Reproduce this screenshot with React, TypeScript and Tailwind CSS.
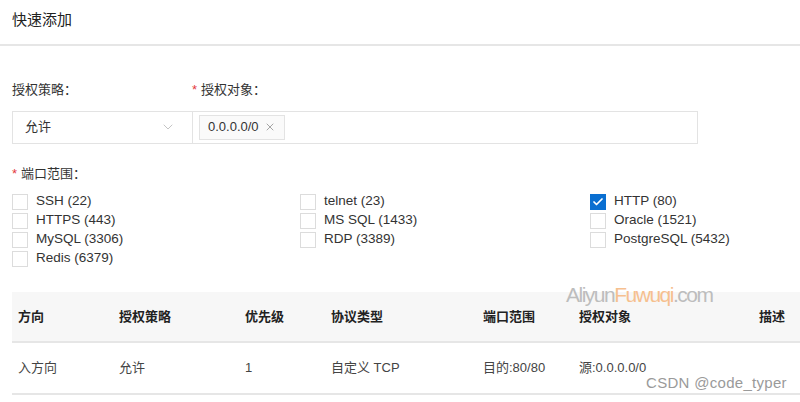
import { Check, ChevronDown, X } from "lucide-react"

const FONT = { fontFamily: '"Liberation Sans", "Noto Sans CJK SC", sans-serif' }

const ports = [
  [
    { label: "SSH (22)" },
    { label: "HTTPS (443)" },
    { label: "MySQL (3306)" },
    { label: "Redis (6379)" },
  ],
  [{ label: "telnet (23)" }, { label: "MS SQL (1433)" }, { label: "RDP (3389)" }],
  [{ label: "HTTP (80)", checked: true }, { label: "Oracle (1521)" }, { label: "PostgreSQL (5432)" }],
]

const cols = [
  { title: "方向", value: "入方向", w: "w-[101px]" },
  { title: "授权策略", value: "允许", w: "w-[126px]" },
  { title: "优先级", value: "1", w: "w-[86px]" },
  { title: "协议类型", value: "自定义 TCP", w: "w-[152px]" },
  { title: "端口范围", value: "目的:80/80", w: "w-[96px]" },
  { title: "授权对象", value: "源:0.0.0.0/0", w: "flex-1" },
]

function Box({ checked }: { checked?: boolean }) {
  if (checked) {
    return (
      <span className="flex h-4 w-4 items-center justify-center bg-[#0a6fd1]">
        <Check className="h-3 w-3 text-white" strokeWidth={3.5} />
      </span>
    )
  }
  return <span className="h-4 w-4 border border-[#dcdcdc] bg-white" />
}

export default function App() {
  return (
    <div className="relative h-[402px] w-[800px] overflow-hidden bg-white text-[#333]" style={FONT}>
      <div className="flex h-[44px] items-center px-3 pb-1 text-[15px] text-[#222]">快速添加</div>
      <div className="h-[2px] bg-[#e6e6e6]" />

      <div className="px-3">
        <div className="mt-[34px] flex text-[13px] text-[#333]">
          <div className="w-[180px]">授权策略：</div>
          <div className="flex items-center gap-1">
            <span className="text-[#e4393c]">*</span>
            <span>授权对象：</span>
          </div>
        </div>

        <div className="mt-[11px] flex h-[33px]">
          <div className="flex w-[181px] items-center justify-between border border-[#e3e3e3] pl-3 pr-4 text-[13px] text-[#333]">
            <span>允许</span>
            <ChevronDown className="h-4 w-4 text-[#b5b5b5]" strokeWidth={1.2} />
          </div>
          <div className="flex w-[505px] items-center border border-l-0 border-[#e3e3e3] pl-[6px]">
            <div className="flex h-[25px] items-center gap-[5px] border border-[#e3e3e3] bg-[#fafafa] px-2 text-[13px] text-[#333]">
              <span>0.0.0.0/0</span>
              <X className="h-3 w-3 text-[#888]" strokeWidth={1.5} />
            </div>
          </div>
        </div>

        <div className="mt-[20px] flex items-center gap-1 text-[13px] text-[#333]">
          <span className="text-[#e4393c]">*</span>
          <span>端口范围：</span>
        </div>

        <div className="mt-[9px] grid grid-cols-[288px_290px_1fr]">
          {ports.map((col, i) => (
            <div key={i} className="flex flex-col">
              {col.map((p) => (
                <div key={p.label} className="flex h-[19px] items-center gap-2 text-[13.5px] text-[#333]">
                  <Box checked={p.checked} />
                  <span>{p.label}</span>
                </div>
              ))}
            </div>
          ))}
        </div>
      </div>

      <div className="ml-3 mt-[24px]">
        <div className="flex h-[51px] items-center border-b-2 border-[#e6e6e6] bg-[#f7f7f7] pl-[6px] pr-[15px] text-[13px] font-bold text-[#222]">
          {cols.map((c) => (
            <div key={c.title} className={c.w}>
              {c.title}
            </div>
          ))}
          <div>描述</div>
        </div>
        <div className="flex h-[52px] items-center border-b-2 border-[#e6e6e6] pl-[6px] pr-[15px] text-[13px] text-[#444]">
          {cols.map((c) => (
            <div key={c.title} className={c.w}>
              {c.value}
            </div>
          ))}
        </div>
      </div>

      <div className="absolute left-[566px] top-[279px] text-[21px] tracking-[-1.5px] text-[#bdbdbd]">
        Aliyun<span className="text-[#f6c08f]">Fuwuqi</span>.com
      </div>
      <div className="absolute left-[646px] top-[372px] text-[15px] tracking-[0.3px] text-[#9a9a9a]">
        CSDN @code_typer
      </div>
    </div>
  )
}
